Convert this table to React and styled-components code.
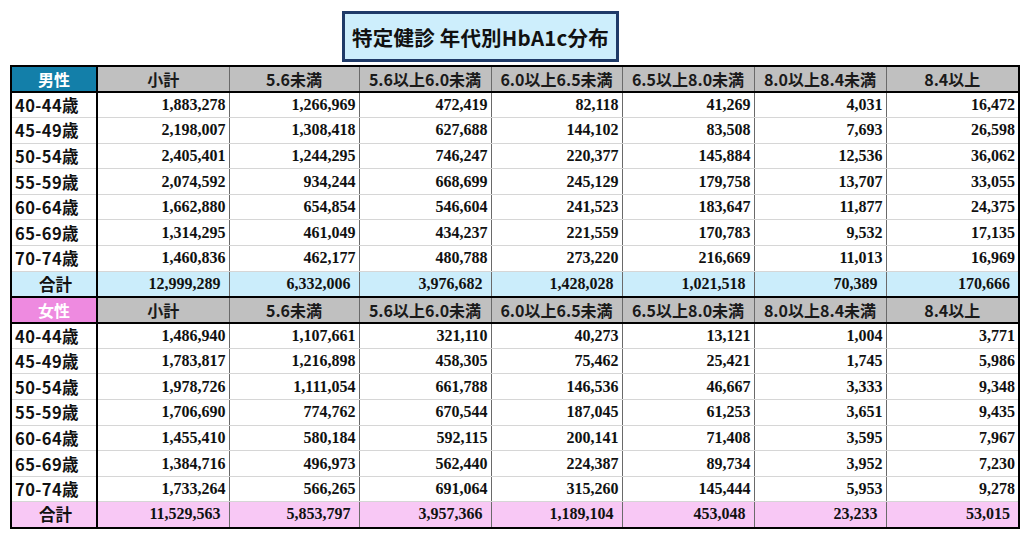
import React from "react";
import styled, { createGlobalStyle } from "styled-components";

const GlobalStyle = createGlobalStyle`
  body {
    margin: 0;
    background: #fff;
  }
`;

const SANS = `"Noto Sans CJK JP", "Noto Sans", sans-serif`;
const SERIF = `"Liberation Serif", "Times New Roman", serif`;

const HEADS = ["小計", "5.6未満", "5.6以上6.0未満", "6.0以上6.5未満", "6.5以上8.0未満", "8.0以上8.4未満", "8.4以上"];
const WIDTHS = [86, 132, 130, 132, 131, 132, 132, 133];

const SECTIONS = [
  {
    label: "男性",
    labelBg: "#137fa9",
    totalBg: "#cbedfb",
    rows: [
      ["40-44歳", "1,883,278", "1,266,969", "472,419", "82,118", "41,269", "4,031", "16,472"],
      ["45-49歳", "2,198,007", "1,308,418", "627,688", "144,102", "83,508", "7,693", "26,598"],
      ["50-54歳", "2,405,401", "1,244,295", "746,247", "220,377", "145,884", "12,536", "36,062"],
      ["55-59歳", "2,074,592", "934,244", "668,699", "245,129", "179,758", "13,707", "33,055"],
      ["60-64歳", "1,662,880", "654,854", "546,604", "241,523", "183,647", "11,877", "24,375"],
      ["65-69歳", "1,314,295", "461,049", "434,237", "221,559", "170,783", "9,532", "17,135"],
      ["70-74歳", "1,460,836", "462,177", "480,788", "273,220", "216,669", "11,013", "16,969"],
    ],
    total: ["12,999,289", "6,332,006", "3,976,682", "1,428,028", "1,021,518", "70,389", "170,666"],
  },
  {
    label: "女性",
    labelBg: "#ee8ae0",
    totalBg: "#f8c8f5",
    rows: [
      ["40-44歳", "1,486,940", "1,107,661", "321,110", "40,273", "13,121", "1,004", "3,771"],
      ["45-49歳", "1,783,817", "1,216,898", "458,305", "75,462", "25,421", "1,745", "5,986"],
      ["50-54歳", "1,978,726", "1,111,054", "661,788", "146,536", "46,667", "3,333", "9,348"],
      ["55-59歳", "1,706,690", "774,762", "670,544", "187,045", "61,253", "3,651", "9,435"],
      ["60-64歳", "1,455,410", "580,184", "592,115", "200,141", "71,408", "3,595", "7,967"],
      ["65-69歳", "1,384,716", "496,973", "562,440", "224,387", "89,734", "3,952", "7,230"],
      ["70-74歳", "1,733,264", "566,265", "691,064", "315,260", "145,444", "5,953", "9,278"],
    ],
    total: ["11,529,563", "5,853,797", "3,957,366", "1,189,104", "453,048", "23,233", "53,015"],
  },
];

const Page = styled.div`
  width: 1024px;
  height: 536px;
  box-sizing: border-box;
  padding: 11px 0 0 10px;
`;

const TitleRow = styled.div`
  display: flex;
  padding-left: 332px;
  margin-bottom: 3px;
`;

const TitleBox = styled.div`
  width: 277px;
  height: 51px;
  box-sizing: border-box;
  border: 3px solid #1f3a68;
  background: #cdeefc;
  display: flex;
  align-items: center;
  justify-content: center;
  font-family: ${SANS};
  font-weight: 700;
  font-size: 20.5px;
  letter-spacing: 0.2px;
  color: #111;
`;

const Table = styled.table`
  width: 1008px;
  border-collapse: collapse;
  table-layout: fixed;
  border: 2px solid #000;
`;

const Row = styled.tr`
  height: ${(p) => (p.$head ? "26px" : "25.6px")};
`;

const HeadCell = styled.td`
  padding: 0;
  background: ${(p) => p.$bg || "#c0c0c0"};
  color: ${(p) => (p.$bg ? "#fff" : "#1a1a1a")};
  font-family: ${SANS};
  font-weight: 700;
  font-size: 16px;
  text-align: center;
  line-height: 22px;
  border-top: 2px solid #000;
  border-bottom: 2px solid #000;
  border-right: ${(p) => (p.$first ? "2px solid #000" : "1px solid #6a6a6a")};
`;

const LabelCell = styled.td`
  padding: 0 0 0 3px;
  background: ${(p) => p.$bg || "#fff"};
  color: #111;
  font-family: ${SANS};
  font-weight: 700;
  font-size: 16.5px;
  letter-spacing: ${(p) => (p.$bg ? "0" : "0.4px")};
  line-height: 22px;
  text-align: ${(p) => (p.$bg ? "center" : "left")};
  border-right: 2px solid #000;
  border-bottom: 1px solid #d6d6d6;
`;

const NumCell = styled.td`
  padding: 0 ${(p) => (p.$bg ? "8px" : "3px")} 0 0;
  background: ${(p) => p.$bg || "#fff"};
  color: #111;
  font-family: ${SERIF};
  font-weight: 700;
  font-size: 16px;
  line-height: 22px;
  text-align: right;
  border-right: 1px solid #6a6a6a;
  border-bottom: 1px solid #d6d6d6;
`;

const Section = ({ section }) => (
  <>
    <Row $head>
      <HeadCell $first $bg={section.labelBg}>
        {section.label}
      </HeadCell>
      {HEADS.map((h) => (
        <HeadCell key={h}>{h}</HeadCell>
      ))}
    </Row>
    {section.rows.map(([age, ...nums]) => (
      <Row key={age}>
        <LabelCell>{age}</LabelCell>
        {nums.map((n, i) => (
          <NumCell key={i}>{n}</NumCell>
        ))}
      </Row>
    ))}
    <Row>
      <LabelCell $bg={section.totalBg}>合計</LabelCell>
      {section.total.map((n, i) => (
        <NumCell key={i} $bg={section.totalBg}>
          {n}
        </NumCell>
      ))}
    </Row>
  </>
);

export default function App() {
  return (
    <Page>
      <GlobalStyle />
      <TitleRow>
        <TitleBox>特定健診 年代別HbA1c分布</TitleBox>
      </TitleRow>
      <Table>
        <colgroup>
          {WIDTHS.map((w, i) => (
            <col key={i} style={{ width: w }} />
          ))}
        </colgroup>
        <tbody>
          {SECTIONS.map((s) => (
            <Section key={s.label} section={s} />
          ))}
        </tbody>
      </Table>
    </Page>
  );
}
